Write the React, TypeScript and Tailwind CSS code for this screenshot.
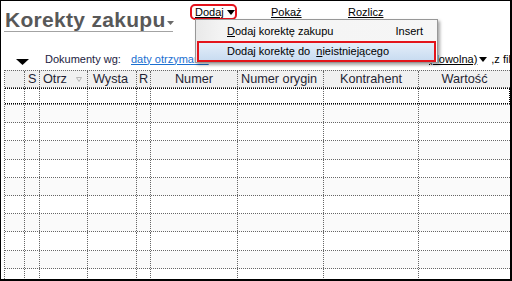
import React from "react";

const widths = [
  "w-[20px]",
  "w-[15px]",
  "w-[48px]",
  "w-[49px]",
  "w-[14px]",
  "w-[87px]",
  "w-[86px]",
  "w-[95px]",
  "flex-1",
];

function Tri({ className = "", w = 7, h = 4, color = "#000" }) {
  return (
    <svg width={w} height={h} viewBox={`0 0 ${w} ${h}`} className={`shrink-0 ${className}`}>
      <polygon points={`0,0 ${w},0 ${w / 2},${h}`} fill={color} />
    </svg>
  );
}

function HeaderRow() {
  const cells: React.ReactNode[] = [
    null,
    <span className="pl-[3px]">S</span>,
    <span className="flex items-center pl-[3px]">
      Otrz
      <svg width="6" height="5" viewBox="0 0 6 5" className="ml-[9px]">
        <polygon points="0.5,0.5 5.5,0.5 3,4.5" fill="none" stroke="#b5b5b5" />
      </svg>
    </span>,
    <span className="pl-[5px]">Wysta</span>,
    <span className="pl-[2px]">R</span>,
    <span className="w-full text-center">Numer</span>,
    <span className="pl-[3px]">Numer orygin</span>,
    <span className="w-full text-center">Kontrahent</span>,
    <span className="w-full text-center">Wartość</span>,
  ];
  return (
    <div className="flex h-[18px] shrink-0 border-y border-dotted border-[#666] bg-[#f0f0f0] text-[12.7px] leading-[16px] text-[#1f1f33]">
      {widths.map((w, i) => (
        <div
          key={i}
          className={`${w} shrink-0 flex items-center overflow-hidden whitespace-nowrap ${
            i < 8 ? "border-r border-dotted border-[#666]" : ""
          }`}
        >
          {cells[i]}
        </div>
      ))}
    </div>
  );
}

function Row({ height, shade, focus }: { height: string; shade: boolean; focus?: boolean }) {
  return (
    <div
      className={`relative flex shrink-0 ${height} ${
        shade ? "bg-[#fafafa]" : "bg-white"
      } border-b border-dotted border-[#666]`}
    >
      {widths.map((w, i) => (
        <div
          key={i}
          className={`${w} shrink-0 ${i < 8 ? "border-r border-dotted border-[#666]" : ""}`}
        />
      ))}
      {focus && (
        <div className="absolute -left-px top-0 right-0 bottom-0 border border-dotted border-black" />
      )}
    </div>
  );
}

export default function App() {
  return (
    <div className="relative flex h-[281px] w-[512px] flex-col overflow-hidden border-t border-l border-r-2 border-b-2 border-black bg-white font-['Liberation_Sans',Arial,sans-serif]">
      {/* title + menu bar */}
      <div className="flex h-[49px] shrink-0 items-start">
        <div className="ml-[3px] mt-[8px] flex w-[169px] shrink-0 items-end whitespace-nowrap border-b border-[#a3a3a3] pl-[1px]">
          <span className="shrink-0 text-[21px] font-bold leading-[22px] tracking-[0.3px] text-[#585858]">
            Korekty zakupu
          </span>
          <Tri className="mb-[6px] ml-[1px]" w={7} h={4} color="#6a6a6a" />
        </div>
        <div className="ml-[17px] mt-[3px] flex items-center text-[11px] text-black">
          <div className="flex h-[16px] w-[47px] items-center rounded-[5px] border-2 border-[#e3111b] pl-[3px]">
            <span className="underline">Dodaj</span>
            <Tri className="ml-[3px]" w={8} h={5} />
          </div>
          <div className="ml-[34px] w-[77px]">
            <span className="underline">Pokaż</span>
          </div>
          <div>
            <span className="underline">Rozlicz</span>
          </div>
        </div>
      </div>

      {/* filter bar */}
      <div className="flex h-[18px] shrink-0 items-center whitespace-nowrap text-[11px] text-[#1b1b3e]">
        <div className="flex w-[428px] shrink-0 items-center overflow-hidden">
          <svg width="13" height="6" viewBox="0 0 13 6" className="ml-[15px] mt-[6px] shrink-0">
            <polygon points="0,0 13,0 6.5,6" fill="#000" />
          </svg>
          <span className="ml-[16px] w-[86px] shrink-0">Dokumenty wg:</span>
          <span className="shrink-0 text-[#1a6fd0] underline">daty otrzymania</span>
        </div>
        <span className="shrink-0 text-black underline">(dowolna)</span>
        <Tri className="ml-[2px]" w={8} h={5} />
        <span className="ml-[4px] shrink-0 text-black">,z filtrem</span>
      </div>

      {/* grid */}
      <div className="ml-[3px] mt-[2px] flex min-h-0 flex-1 flex-col overflow-hidden border-l border-dotted border-[#666]">
        <HeaderRow />
        <Row height="h-[17px]" shade={false} focus />
        {Array.from({ length: 10 }).map((_, i) => (
          <Row key={i} height="h-[18.2px]" shade={i % 2 === 0} />
        ))}
      </div>

      {/* dropdown menu */}
      <div className="absolute left-[194px] top-[18px] h-[44px] w-[243px] border border-[#979797] bg-[linear-gradient(to_right,#e9e9e9_0px,#f4f4f4_26px,#f6f6f6_100%)] pt-[2px] text-[11px] text-black shadow-[2px_2px_3px_rgba(0,0,0,0.35)]">
        <div className="flex h-[19px] items-center justify-between pl-[31px] pr-[14px]">
          <span>
            <span className="underline">D</span>odaj korektę zakupu
          </span>
          <span>Insert</span>
        </div>
        <div className="mx-[1px] flex h-[21px] items-center border-2 border-[#e3151c] bg-[linear-gradient(to_bottom,#e4eef9,#c9dcf1)] pl-[28px] whitespace-pre">
          Dodaj korektę do  <span className="underline">n</span>ieistniejącego
        </div>
      </div>
    </div>
  );
}
